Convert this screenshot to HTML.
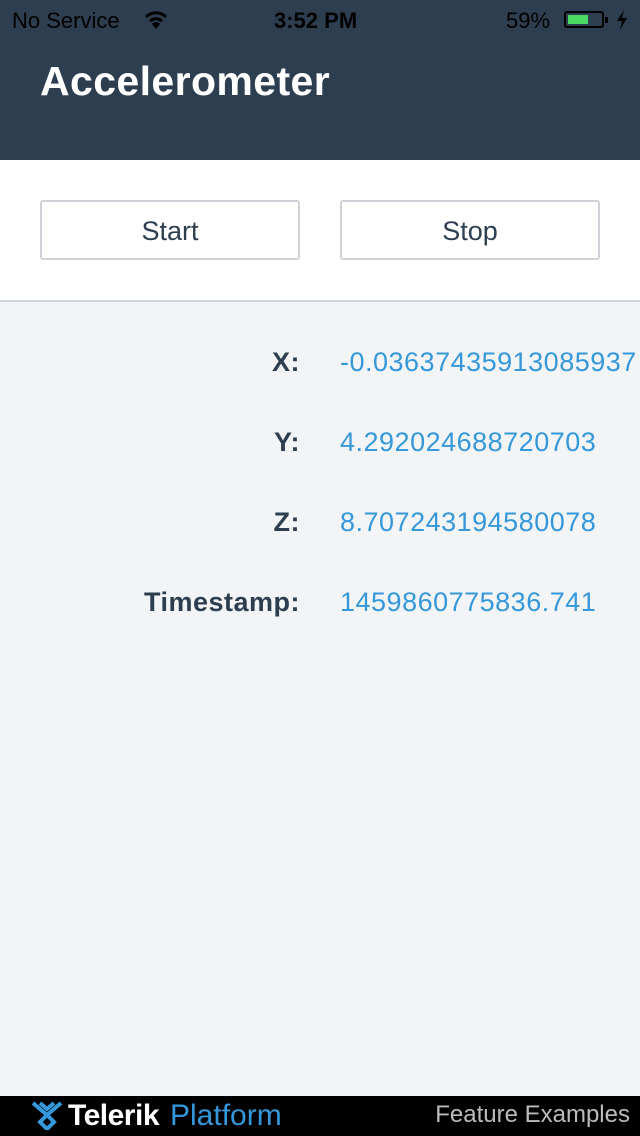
<!DOCTYPE html>
<html><head><style>
body{margin:0;width:640px;height:1136px;position:relative;background:#f3f4f6;font-family:"Liberation Sans",Arial,sans-serif;overflow:hidden}
.hdr{position:absolute;left:0;top:0;width:640px;height:160px;background:#2d3e50}
.sb{position:absolute;top:8px;font-size:22px;color:#000}
.title{position:absolute;left:40px;top:58px;font-size:41px;font-weight:bold;color:#fff;letter-spacing:0.4px}
.bar{position:absolute;top:160px;left:0;width:640px;height:140px;background:#fff;border-bottom:2px solid #cdd3da}
.btn{position:absolute;top:40px;width:256px;height:56px;border:2px solid #cfd2d6;border-radius:3px;font-size:27px;color:#2d3e50;text-align:center;line-height:58px}
.lbl{position:absolute;right:340px;font-size:27px;font-weight:bold;color:#2d3e50;letter-spacing:0.5px}
.val{position:absolute;left:340px;font-size:27px;color:#3498db;white-space:nowrap;letter-spacing:0.5px}
.ft{position:absolute;left:0;top:1096px;width:640px;height:40px;background:#000}
</style></head><body>
<div class="hdr">
<div class="sb" style="left:12px">No Service</div>
<svg style="position:absolute;left:144px;top:10px" width="24" height="20" viewBox="0 0 24 20"><path d="M2 7 A14 14 0 0 1 22 7" stroke="#000" stroke-width="3" fill="none"/><path d="M6 11 A9 9 0 0 1 18 11" stroke="#000" stroke-width="3" fill="none"/><path d="M12 19 L8 14 A5 5 0 0 1 16 14 Z" fill="#000"/></svg>
<div class="sb" style="left:274px;font-weight:bold">3:52 PM</div>
<div class="sb" style="left:506px">59%</div>
<div style="position:absolute;left:564px;top:11px;width:40px;height:17px;border:2px solid #000;border-radius:3px;box-sizing:border-box"><div style="position:absolute;left:2px;top:2px;width:20px;height:9px;background:#4cd964"></div></div>
<div style="position:absolute;left:605px;top:17px;width:3px;height:6px;background:#000"></div>
<svg style="position:absolute;left:616px;top:10px" width="12" height="20" viewBox="0 0 12 20"><path d="M8 0 L1 11 H6 L4 20 L11 8 H6 Z" fill="#000"/></svg>
<div class="title">Accelerometer</div>
</div>
<div class="bar">
<div class="btn" style="left:40px">Start</div>
<div class="btn" style="left:340px">Stop</div>
</div>
<div class="lbl" style="top:347px">X:</div><div class="val" style="top:347px">-0.03637435913085937</div>
<div class="lbl" style="top:427px">Y:</div><div class="val" style="top:427px">4.292024688720703</div>
<div class="lbl" style="top:507px">Z:</div><div class="val" style="top:507px">8.707243194580078</div>
<div class="lbl" style="top:587px">Timestamp:</div><div class="val" style="top:587px">1459860775836.741</div>
<div class="ft">
<svg style="position:absolute;left:30px;top:4px" width="34" height="30" viewBox="0 0 34 30"><path d="M3 3 L17 15 L31 3 M17 15 L10 22 L17 29 L24 22 Z M10 3 L17 9 L24 3" stroke="#3498db" stroke-width="4" fill="none"/></svg>
<div style="position:absolute;left:68px;top:3px;font-size:30px;font-weight:bold;color:#fff;letter-spacing:-0.5px">Telerik</div>
<div style="position:absolute;left:170px;top:3px;font-size:30px;color:#3498db">Platform</div>
<div style="position:absolute;right:10px;top:5px;font-size:24px;color:#bbb">Feature Examples</div>
</div>
</body></html>
